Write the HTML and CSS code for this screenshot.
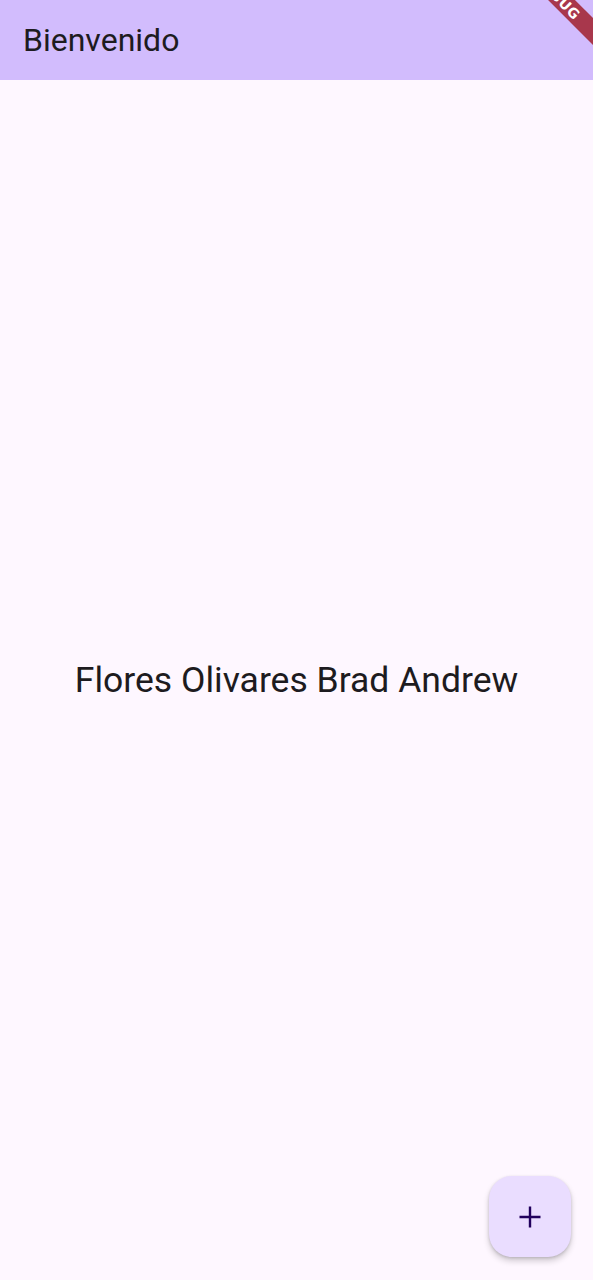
FILE: index.html
```html
<!DOCTYPE html>
<html lang="es">
<head>
<meta charset="utf-8">
<link rel="stylesheet" href="styles.css">
</head>
<body>
<div class="screen">
  <header class="appbar"><h1 class="title">Bienvenido</h1></header>
  <main class="content"><p class="name">Flores Olivares Brad Andrew</p></main>
  <button class="fab" aria-label="Agregar">
    <svg width="24" height="24" viewBox="0 0 24 24"><path d="M12 1.5v21M1.5 12h21" stroke="#21005D" stroke-width="2.4" fill="none"/></svg>
  </button>
  <div class="banner"><span>DEBUG</span></div>
</div>
</body>
</html>
```
FILE: styles.css
```css
html, body { margin: 0; padding: 0; }
body { background: #FEF7FF; font-family: Roboto, "Noto Sans", sans-serif; color: #1D1B20; }
.screen { position: relative; width: 593px; height: 1280px; display: flex; flex-direction: column; overflow: hidden; }
.appbar { height: 80px; background: #D2BCFD; display: flex; align-items: center; padding-left: 23px; flex-shrink: 0; }
.title { margin: 0; font-size: 32px; font-weight: 400; letter-spacing: 0; }
.content { flex: 1; display: flex; align-items: center; justify-content: center; }
.name { margin: 0; font-size: 35.5px; font-weight: 400; }
.fab { position: absolute; right: 22px; bottom: 23px; width: 82px; height: 81px; border: none; border-radius: 23px; background: #EADDFF; display: flex; align-items: center; justify-content: center; box-shadow: 0 4px 6px rgba(0,0,0,0.18), 0 1px 3px rgba(0,0,0,0.15); padding: 0; }
.banner { position: absolute; top: -13.5px; right: -45px; width: 160px; height: 19px; background: #A8374C; transform: rotate(45deg); display: flex; align-items: center; justify-content: center; }
.banner span { color: #fff; font-weight: 700; font-size: 14px; font-family: "DejaVu Sans", sans-serif; letter-spacing: 0.5px; }
```
